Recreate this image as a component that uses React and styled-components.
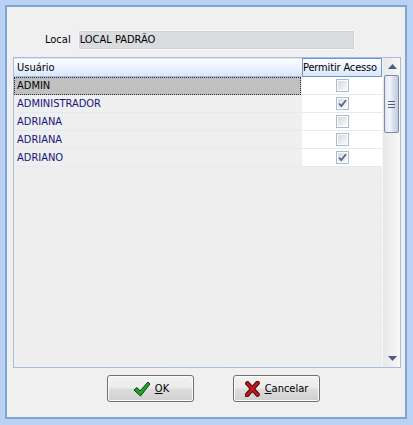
import React from 'react';
import styled, { createGlobalStyle } from 'styled-components';

const GlobalStyle = createGlobalStyle`
  html, body {
    margin: 0;
    padding: 0;
    background: #bad3f5;
  }
  * { box-sizing: border-box; }
`;

const usuarios = [
  { nome: 'ADMIN', acesso: false, selecionado: true },
  { nome: 'ADMINISTRADOR', acesso: true },
  { nome: 'ADRIANA', acesso: false },
  { nome: 'ADRIANA', acesso: false },
  { nome: 'ADRIANO', acesso: true },
];

const Check = ({ marcado }) => (
  <svg width="13" height="13" viewBox="0 0 13 13">
    <defs>
      <linearGradient id="cbg" x1="0" y1="0" x2="1" y2="1">
        <stop offset="0" stopColor="#d8d8d8" />
        <stop offset="1" stopColor="#fafafa" />
      </linearGradient>
    </defs>
    <rect x="0.5" y="0.5" width="12" height="12" fill="#fff" stroke="#a7bad6" />
    <rect x="2" y="2" width="9" height="9" fill="url(#cbg)" />
    {marcado && (
      <path d="M3 6.5 L5.3 9 L10 3.2" fill="none" stroke="#4b6a98" strokeWidth="1.8" />
    )}
  </svg>
);

const OkIcon = () => (
  <svg width="18" height="16" viewBox="0 0 18 16">
    <polygon
      points="1,9 4,6.5 7,10 15,1 17,3 7.5,15"
      fill="#1fa61f"
      stroke="#0c3a10"
      strokeWidth="1"
      strokeLinejoin="round"
    />
  </svg>
);

const CancelIcon = () => (
  <svg width="15" height="16" viewBox="0 0 15 16">
    <path d="M2.5 2.5 L12.5 13.5 M12.5 2 L2 14" stroke="#4a0505" strokeWidth="4.6" strokeLinecap="round" />
    <path d="M2.5 2.5 L12.5 13.5 M12.5 2 L2 14" stroke="#c81818" strokeWidth="2.6" strokeLinecap="round" />
  </svg>
);

const Arrow = ({ down }) => (
  <svg width="9" height="5" viewBox="0 0 9 5">
    <polygon points={down ? '0,0 9,0 4.5,5' : '0,5 9,5 4.5,0'} fill="#4d5f80" />
  </svg>
);

const Moldura = styled.div`
  width: 413px;
  height: 425px;
  padding: 5px 6px 6px 5px;
  background: #bad3f5;
`;

const Formulario = styled.div`
  height: 100%;
  border: 2px solid #80a4d6;
  background: #f0f0f0;
  font-family: "DejaVu Sans Condensed", "DejaVu Sans", sans-serif;
  font-stretch: condensed;
  font-size: 11px;
  color: #000;
  display: flex;
  flex-direction: column;
`;

const LinhaLocal = styled.div`
  display: flex;
  align-items: center;
  gap: 7px;
  padding: 23px 0 0 38px;
`;

const Rotulo = styled.span`
  line-height: 20px;
`;

const CampoTexto = styled.div`
  width: 277px;
  height: 20px;
  background: #dadcdf;
  border: 1px solid #f6f6f6;
  outline: 1px solid #d0d3d7;
  outline-offset: -2px;
  padding-left: 1px;
  line-height: 18px;
`;

const Grade = styled.div`
  margin: 7px 0 0 6px;
  width: 388px;
  height: 311px;
  border: 1px solid #aabdd8;
  background: #eeeeee;
  display: flex;
`;

const Conteudo = styled.div`
  width: 368px;
  display: flex;
  flex-direction: column;
`;

const Colunas = styled.div`
  display: grid;
  grid-template-columns: 288px 80px;
`;

const Cabecalho = styled.div`
  height: 19px;
  line-height: 17px;
  padding-left: ${(p) => (p.$realce ? '0' : '2px')};
  letter-spacing: ${(p) => (p.$realce ? '-0.15px' : '0')};
  background: linear-gradient(#fdfeff 0%, #eef4fe 45%, #d9e6fb 100%);
  border: 1px solid ${(p) => (p.$realce ? '#6b98d4' : 'transparent')};
  border-bottom-color: ${(p) => (p.$realce ? '#6b98d4' : '#a3bde3')};
  white-space: nowrap;
  overflow: hidden;
`;

const CelulaNome = styled.div`
  height: 18px;
  line-height: 16px;
  padding-left: 2px;
  color: ${(p) => (p.$sel ? '#000' : '#14147e')};
  background: ${(p) => (p.$sel ? '#c0c0c0' : '#efefef')};
  border: 1px ${(p) => (p.$sel ? 'dotted #2a2a2a' : 'solid transparent')};
  border-bottom: 1px solid ${(p) => (p.$sel ? '#2a2a2a' : '#e2eaf6')};
  border-bottom-style: ${(p) => (p.$sel ? 'dotted' : 'solid')};
  margin-right: 1px;
`;

const CelulaAcesso = styled.div`
  height: 18px;
  background: #fff;
  border-bottom: 1px solid #e2eaf6;
  display: flex;
  align-items: center;
  justify-content: center;
  padding-left: 1px;
  padding-bottom: 1px;
`;

const AreaVazia = styled.div`
  flex: 1;
  display: flex;
`;

const Fantasma = styled.div`
  width: ${(p) => p.$largura}px;
  margin-top: ${(p) => p.$topo}px;
  background: repeating-linear-gradient(
    to bottom,
    transparent 0 17px,
    #e7ecf3 17px 18px
  );
  background-position-y: ${(p) => p.$desvio}px;
`;

const Rolagem = styled.div`
  width: 18px;
  border-left: 1px solid #f7f7f7;
  background: linear-gradient(to right, #e8e8e8, #f3f3f3 70%, #f8f8f8);
  display: flex;
  flex-direction: column;
  align-items: center;
`;

const BotaoSeta = styled.div`
  height: 17px;
  display: flex;
  align-items: center;
  justify-content: center;
  padding-left: 1px;
`;

const Polegar = styled.div`
  width: 15px;
  height: 58px;
  border: 1px solid #7b8aa5;
  border-radius: 2px;
  background: linear-gradient(to right, #dfe6f0, #f4f6fa 35%, #d3dcea 70%, #c0cde0);
  display: flex;
  flex-direction: column;
  align-items: center;
  justify-content: center;
  gap: 2px;
`;

const Risco = styled.div`
  width: 7px;
  height: 1px;
  background: #4e5f7e;
`;

const Trilho = styled.div`
  flex: 1;
`;

const Botoes = styled.div`
  display: flex;
  gap: 39px;
  padding: 7px 0 0 100px;
`;

const Botao = styled.button`
  width: 87px;
  height: 27px;
  border: 1px solid #707070;
  border-radius: 3px;
  background: linear-gradient(#f2f2f2 0%, #ebebeb 48%, #dddddd 52%, #cfcfcf 100%);
  box-shadow: inset 0 0 0 1px #fcfcfc;
  font-family: inherit;
  font-stretch: condensed;
  font-size: 11px;
  color: #000;
  display: flex;
  align-items: center;
  justify-content: center;
  gap: ${(p) => p.$gap}px;
  padding: 0 0 0 ${(p) => p.$desloc}px;
`;

const Texto = styled.span`
  line-height: 14px;
`;

export default function App() {
  return (
    <>
      <GlobalStyle />
      <Moldura>
        <Formulario>
          <LinhaLocal>
            <Rotulo>Local</Rotulo>
            <CampoTexto>LOCAL PADRÃO</CampoTexto>
          </LinhaLocal>

          <Grade>
            <Conteudo>
              <Colunas>
                <Cabecalho>Usuário</Cabecalho>
                <Cabecalho $realce>Permitir Acesso</Cabecalho>
                {usuarios.map((u, i) => (
                  <React.Fragment key={i}>
                    <CelulaNome $sel={u.selecionado}>{u.nome}</CelulaNome>
                    <CelulaAcesso>
                      <Check marcado={u.acesso} />
                    </CelulaAcesso>
                  </React.Fragment>
                ))}
              </Colunas>
              <AreaVazia>
                <Fantasma $largura={154} $topo={3} $desvio={0} />
                <Fantasma $largura={60} $topo={0} $desvio={0} />
                <Fantasma $largura={154} $topo={0} $desvio={-1} />
              </AreaVazia>
            </Conteudo>
            <Rolagem>
              <BotaoSeta>
                <Arrow />
              </BotaoSeta>
              <Polegar>
                <Risco />
                <Risco />
                <Risco />
              </Polegar>
              <Trilho />
              <BotaoSeta>
                <Arrow down />
              </BotaoSeta>
            </Rolagem>
          </Grade>

          <Botoes>
            <Botao $gap={4} $desloc={1}>
              <OkIcon />
              <Texto>
                <u>O</u>K
              </Texto>
            </Botao>
            <Botao $gap={5} $desloc={0}>
              <CancelIcon />
              <Texto>
                <u>C</u>ancelar
              </Texto>
            </Botao>
          </Botoes>
        </Formulario>
      </Moldura>
    </>
  );
}
